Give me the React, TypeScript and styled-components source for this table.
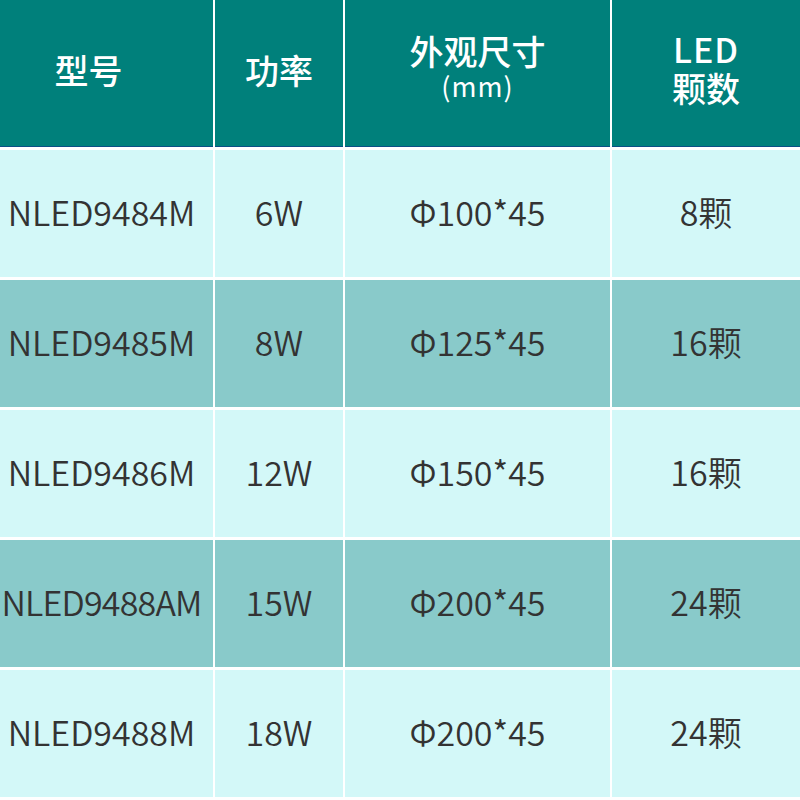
import * as React from "react";
import styled, { createGlobalStyle } from "styled-components";

const GlobalStyle = createGlobalStyle`
  html, body {
    margin: 0;
    padding: 0;
    background: #ffffff;
  }
  body {
    font-family: "Noto Sans CJK SC", "Noto Sans", sans-serif;
  }
`;

type Row = {
  model: string;
  power: string;
  size: string;
  count: string;
};

const rows: Row[] = [
  { model: "NLED9484M", power: "6W", size: "Φ100*45", count: "8颗" },
  { model: "NLED9485M", power: "8W", size: "Φ125*45", count: "16颗" },
  { model: "NLED9486M", power: "12W", size: "Φ150*45", count: "16颗" },
  { model: "NLED9488AM", power: "15W", size: "Φ200*45", count: "24颗" },
  { model: "NLED9488M", power: "18W", size: "Φ200*45", count: "24颗" }
];

export default function App() {
  return (
    <>
      <GlobalStyle />
      <Table>
        <HeadCell $shift={18}>
          <HeadText>型号</HeadText>
        </HeadCell>
        <HeadCell>
          <HeadText>功率</HeadText>
        </HeadCell>
        <HeadCell $lift={14}>
          <HeadText>外观尺寸</HeadText>
          <SubText>(mm)</SubText>
        </HeadCell>
        <HeadCell $lift={8}>
          <HeadText $latin>LED</HeadText>
          <HeadText>颗数</HeadText>
        </HeadCell>
        {rows.map((r, i) => (
          <React.Fragment key={i}>
            <Cell $dark={i % 2 === 1} $shift={10} $tight={r.model.length > 9}>
              {r.model}
            </Cell>
            <Cell $dark={i % 2 === 1}>{r.power}</Cell>
            <Cell $dark={i % 2 === 1}>{r.size}</Cell>
            <Cell $dark={i % 2 === 1}>{r.count}</Cell>
          </React.Fragment>
        ))}
      </Table>
    </>
  );
}

const Table = styled.div`
  width: 800px;
  height: 800px;
  display: grid;
  grid-template-columns: 213px 128px 265px 188px;
  grid-template-rows: 147px repeat(5, 127px);
  column-gap: 2px;
  row-gap: 3px;
  background: #ffffff;
  overflow: hidden;
`;

const HeadCell = styled.div<{ $shift?: number; $lift?: number }>`
  background: #00807b;
  border-bottom: 1px solid #0b4f86;
  box-sizing: border-box;
  display: flex;
  flex-direction: column;
  align-items: center;
  justify-content: center;
  color: #ffffff;
  padding-bottom: ${p => p.$lift || 6}px;
  padding-right: ${p => (p.$shift ? p.$shift * 2 : 0)}px;
`;

const HeadText = styled.div<{ $latin?: boolean }>`
  font-size: 34px;
  font-weight: 500;
  line-height: ${p => (p.$latin ? "38px" : "40px")};
  letter-spacing: ${p => (p.$latin ? "1px" : "0")};
`;

const SubText = styled.div`
  font-size: 27px;
  font-weight: 400;
  line-height: 30px;
  letter-spacing: 1px;
`;

const Cell = styled.div<{ $dark?: boolean; $shift?: number; $tight?: boolean }>`
  background: ${p => (p.$dark ? "#89caca" : "#d3f8f8")};
  color: #333333;
  font-size: 34px;
  font-weight: 350;
  display: flex;
  align-items: center;
  justify-content: center;
  white-space: nowrap;
  overflow: visible;
  padding-right: ${p => p.$shift || 0}px;
  padding-bottom: 4px;
  letter-spacing: ${p => (p.$tight ? "-0.8px" : "0")};
`;
